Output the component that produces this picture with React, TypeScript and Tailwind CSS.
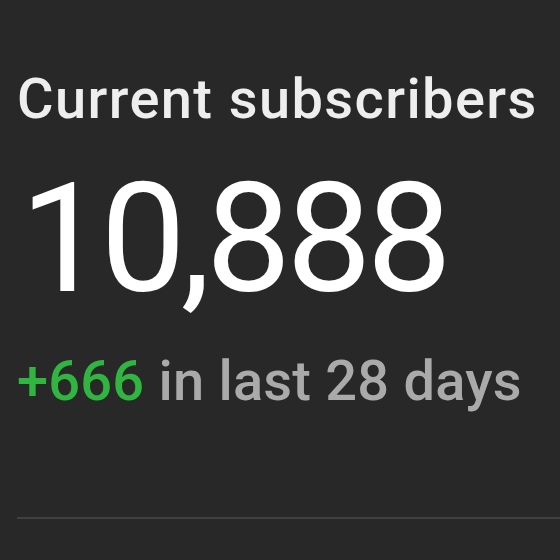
export default function App() {
  return (
    <div className="h-[560px] w-[560px] overflow-hidden bg-[#282828] font-['Roboto',sans-serif]">
      <div className="flex flex-col pl-[17px] pt-[71px]">
        <div className="whitespace-nowrap text-[56px] font-medium leading-[56px] tracking-[1.4px] text-[#eeeeee]">
          Current subscribers
        </div>
        <div className="mt-[36px] whitespace-nowrap pl-[3px] text-[152px] font-normal leading-[152px] tracking-[-5px] text-white">
          10,888
        </div>
        <div className="mt-[38px] whitespace-nowrap text-[56px] font-medium leading-[56px] tracking-[0.2px] text-[#aaaaaa]">
          <span className="text-[#2fb540]">+666</span> in last 28 days
        </div>
        <div className="mt-[108px] h-[2px] bg-[#404040]" />
      </div>
    </div>
  );
}
